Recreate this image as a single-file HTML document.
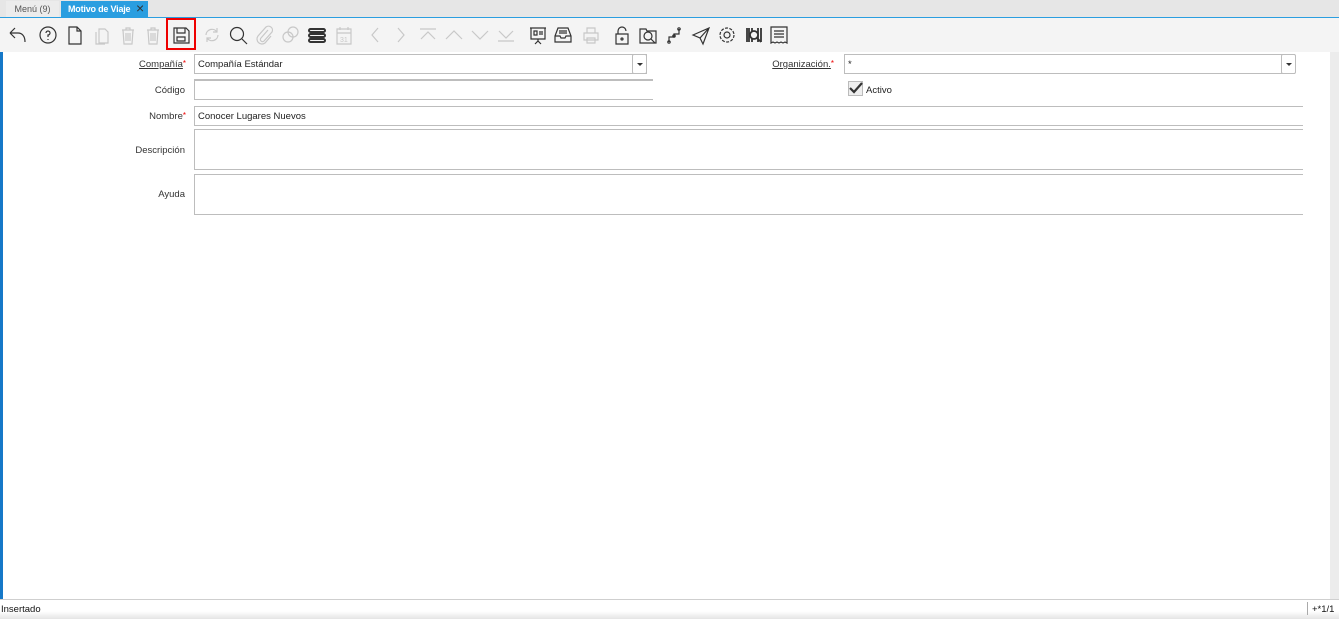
<!DOCTYPE html>
<html><head><meta charset="utf-8">
<style>
*{margin:0;padding:0;box-sizing:border-box}
body{width:1339px;height:619px;overflow:hidden;background:#fff;font-family:"Liberation Sans",sans-serif;font-size:10px;color:#222;position:relative}
.abs{position:absolute}
.tabbar{left:0;top:0;width:1339px;height:17px;background:#e6e6e6}
.tab1{left:6px;top:1px;width:53px;height:16px;background:#ececec;color:#555;font-size:9px;line-height:16px;text-align:center}
.tab2{left:61px;top:1px;width:87px;height:16px;background:#2a9ee0;color:#fff;font-size:9px;line-height:16px;padding-left:7px;font-weight:bold;letter-spacing:-0.2px}
.tb{left:0;top:17px;width:1339px;height:35px;background:#f4f4f4;border-top:1px solid #2a9ee0}
.ic{position:absolute;top:24px;width:22px;height:22px}
.ic svg{width:22px;height:22px;fill:none;stroke:#333;stroke-width:1.2}
.ic.d svg{stroke:#c8c8c8}
.lab{position:absolute;text-align:right;font-size:9.5px;color:#333}
.req{color:#e00;font-size:8px;vertical-align:top}
.f{position:absolute;border:1px solid #bdbdbd;background:#fff;font-size:9.5px;padding-left:3px;padding-top:1px;line-height:18px}
.f.l{border-left:1px solid #bdbdbd;border-right:none}
</style></head><body>
<div class="abs tabbar"></div>
<div class="abs tab1">Menú (9)</div>
<div class="abs tab2">Motivo de Viaje</div>
<div class="abs" style="left:136px;top:0px;color:#333;font-size:14px;line-height:17px">×</div>
<div class="abs tb"></div>

<div class="ic" style="left:6px"><svg viewBox="0 0 22 22"><path d="M4 9l5-5M4 9l5 5M4 9h8c4 0 7 3 7 9"/></svg></div>
<div class="ic" style="left:37px"><svg viewBox="0 0 22 22"><circle cx="11" cy="11" r="8"/><path d="M9 9a2 2 0 1 1 2 2v2M11 15v1"/></svg></div>
<div class="ic" style="left:64px"><svg viewBox="0 0 22 22"><path d="M5 3h8l4 4v13H5zM13 3v4h4"/></svg></div>
<div class="ic d" style="left:91px"><svg viewBox="0 0 22 22"><path d="M8 5h6l3 3v11H8zM5 8v12h9"/></svg></div>
<div class="ic d" style="left:117px"><svg viewBox="0 0 22 22"><path d="M5 6h12M9 6V4h4v2M6 6l1 14h8l1-14M9 9v8M11 9v8M13 9v8"/></svg></div>
<div class="ic d" style="left:142px"><svg viewBox="0 0 22 22"><path d="M5 6h12M9 6V4h4v2M6 6l1 14h8l1-14M9 9v8M11 9v8M13 9v8"/></svg></div>
<div class="abs" style="left:166px;top:18px;width:30px;height:32px;border:2px solid #e00"></div>
<div class="ic" style="left:170px"><svg viewBox="0 0 22 22"><path d="M4 4h12l3 3v12H4zM7 4v5h8V4M7 13h8v4H7z"/></svg></div>
<div class="ic d" style="left:201px"><svg viewBox="0 0 22 22"><path d="M5 11a6 6 0 0 1 11-3M17 11a6 6 0 0 1-11 3M16 4v4h-4M6 18v-4h4"/></svg></div>
<div class="ic" style="left:227px"><svg viewBox="0 0 22 22"><circle cx="10" cy="10" r="6.5"/><path d="M15 15l5 5"/></svg></div>
<div class="ic d" style="left:253px"><svg viewBox="0 0 22 22"><path d="M15 6l-7 8a2 2 0 0 0 3 3l8-9a4 4 0 0 0-6-5l-8 9a5 5 0 0 0 7 7l6-7"/></svg></div>
<div class="ic d" style="left:279px"><svg viewBox="0 0 22 22"><circle cx="9" cy="13" r="5"/><circle cx="14" cy="8" r="5"/></svg></div>
<div class="ic" style="left:306px"><svg viewBox="0 0 22 22" style="stroke-width:2"><rect x="3" y="5" width="16" height="3" rx="1.5"/><rect x="3" y="10" width="16" height="3" rx="1.5"/><rect x="3" y="15" width="16" height="3" rx="1.5"/></svg></div>
<div class="ic d" style="left:333px"><svg viewBox="0 0 22 22"><path d="M4 5h14v15H4zM4 9h14M7 3v3M15 3v3"/><text x="7" y="18" font-size="7" fill="#c8c8c8" stroke="none">31</text></svg></div>
<div class="ic d" style="left:364px"><svg viewBox="0 0 22 22"><path d="M14 4l-6 7 6 7"/></svg></div>
<div class="ic d" style="left:390px"><svg viewBox="0 0 22 22"><path d="M8 4l6 7-6 7"/></svg></div>
<div class="ic d" style="left:417px"><svg viewBox="0 0 22 22"><path d="M3 5h16M4 15l7-7 7 7"/></svg></div>
<div class="ic d" style="left:443px"><svg viewBox="0 0 22 22"><path d="M3 15l8-8 8 8"/></svg></div>
<div class="ic d" style="left:469px"><svg viewBox="0 0 22 22"><path d="M3 7l8 8 8-8"/></svg></div>
<div class="ic d" style="left:495px"><svg viewBox="0 0 22 22"><path d="M3 17h16M4 7l7 7 7-7"/></svg></div>
<div class="ic" style="left:527px"><svg viewBox="0 0 22 22"><path d="M3 4h16M4 4v11h14V4M11 15v2M8 20l3-3 3 3M7 7h3v4H7zM12 8h4M12 10h4"/></svg></div>
<div class="ic" style="left:552px"><svg viewBox="0 0 22 22"><path d="M6 4h10l3 8v6H3v-6zM3 12h5l1 2h4l1-2h5M7 7h8M7 9h8"/></svg></div>
<div class="ic d" style="left:580px"><svg viewBox="0 0 22 22"><path d="M7 4h8v5H7zM4 9h14v7H4zM7 14h8v5H7z"/></svg></div>
<div class="ic" style="left:611px"><svg viewBox="0 0 22 22"><path d="M7 10V7a4 4 0 0 1 8 0M5 10h12v10H5z"/><circle cx="11" cy="15" r="1"/></svg></div>
<div class="ic" style="left:637px"><svg viewBox="0 0 22 22"><path d="M3 5h6l1 2h9v12H3z"/><circle cx="11" cy="12" r="4"/><path d="M14 15l4 4"/></svg></div>
<div class="ic" style="left:664px"><svg viewBox="0 0 22 22"><path d="M5 18v-5h5v-3h5V5"/><circle cx="5" cy="18" r="1.2"/><circle cx="10" cy="12" r="1.2"/><circle cx="15" cy="5" r="1.2"/></svg></div>
<div class="ic" style="left:690px"><svg viewBox="0 0 22 22"><path d="M3 11l16-7-6 16-3-6zM10 14l9-10"/></svg></div>
<div class="ic" style="left:716px"><svg viewBox="0 0 22 22"><circle cx="11" cy="11" r="3"/><circle cx="11" cy="11" r="7" stroke-dasharray="3 1.4"/></svg></div>
<div class="ic" style="left:743px"><svg viewBox="0 0 22 22" style="stroke-width:1.8"><path d="M4 4v14M6 4v14M9 4v14M15 4v14M18 4v14"/><circle cx="11" cy="11" r="4" fill="#f4f4f4"/><path d="M14 14l4 4"/></svg></div>
<div class="ic" style="left:768px"><svg viewBox="0 0 22 22"><path d="M3 3h16v16l-2-1-2 1-2-1-2 1-2-1-2 1-2-1-2 1zM6 7h10M6 10h10M6 13h10"/></svg></div>

<div class="abs" style="left:0;top:52px;width:3px;height:547px;background:#1578c8"></div>
<div class="abs" style="left:1330px;top:52px;width:9px;height:547px;background:#ececec"></div>

<div class="lab" style="left:100px;top:59px;width:86px"><u>Compañía</u><span class="req">*</span></div>
<div class="f" style="left:194px;top:54px;width:453px;height:20px">Compañía Estándar</div>
<div class="abs" style="left:632px;top:54px;width:15px;height:20px;border:1px solid #bdbdbd;border-radius:2px;background:#fff"><div style="position:absolute;left:4px;top:8px;border-left:3px solid transparent;border-right:3px solid transparent;border-top:3px solid #333"></div></div>
<div class="abs" style="left:194px;top:79px;width:459px;height:1px;background:#bdbdbd"></div>
<div class="lab" style="left:100px;top:85px;width:85px">Código</div>
<div class="f l" style="left:194px;top:80px;width:459px;height:20px"></div>
<div class="lab" style="left:100px;top:111px;width:86px">Nombre<span class="req">*</span></div>
<div class="f l" style="left:194px;top:106px;width:1109px;height:20px">Conocer Lugares Nuevos</div>
<div class="lab" style="left:100px;top:145px;width:85px">Descripción</div>
<div class="f l" style="left:194px;top:129px;width:1109px;height:41px"></div>
<div class="lab" style="left:100px;top:189px;width:85px">Ayuda</div>
<div class="f l" style="left:194px;top:174px;width:1109px;height:41px"></div>

<div class="lab" style="left:740px;top:59px;width:94px"><u>Organización.</u><span class="req">*</span></div>
<div class="f" style="left:844px;top:54px;width:451px;height:20px">*</div>
<div class="abs" style="left:1281px;top:54px;width:15px;height:20px;border:1px solid #bdbdbd;border-radius:2px;background:#fff"><div style="position:absolute;left:4px;top:8px;border-left:3px solid transparent;border-right:3px solid transparent;border-top:3px solid #333"></div></div>
<div class="abs" style="left:848px;top:81px;width:15px;height:15px;border:1px solid #bbb;background:#eee"><svg viewBox="0 0 15 15" width="15" height="15" style="position:absolute;left:-1px;top:-1px"><path d="M2 7l4 4 8-9" fill="none" stroke="#333" stroke-width="2.2"/></svg></div>
<div class="abs" style="left:866px;top:85px;font-size:9.5px">Activo</div>

<div class="abs" style="left:0;top:599px;width:1339px;height:1px;background:#cfcfcf"></div>
<div class="abs" style="left:0;top:600px;width:1339px;height:19px;background:linear-gradient(#fff 60%,#e4e4e4)"></div>
<div class="abs" style="left:1px;top:604px;font-size:9.5px;color:#111">Insertado</div>
<div class="abs" style="left:1307px;top:602px;width:1px;height:13px;background:#aaa"></div>
<div class="abs" style="left:1312px;top:604px;font-size:9.5px;color:#111">+*1/1</div>
</body></html>
